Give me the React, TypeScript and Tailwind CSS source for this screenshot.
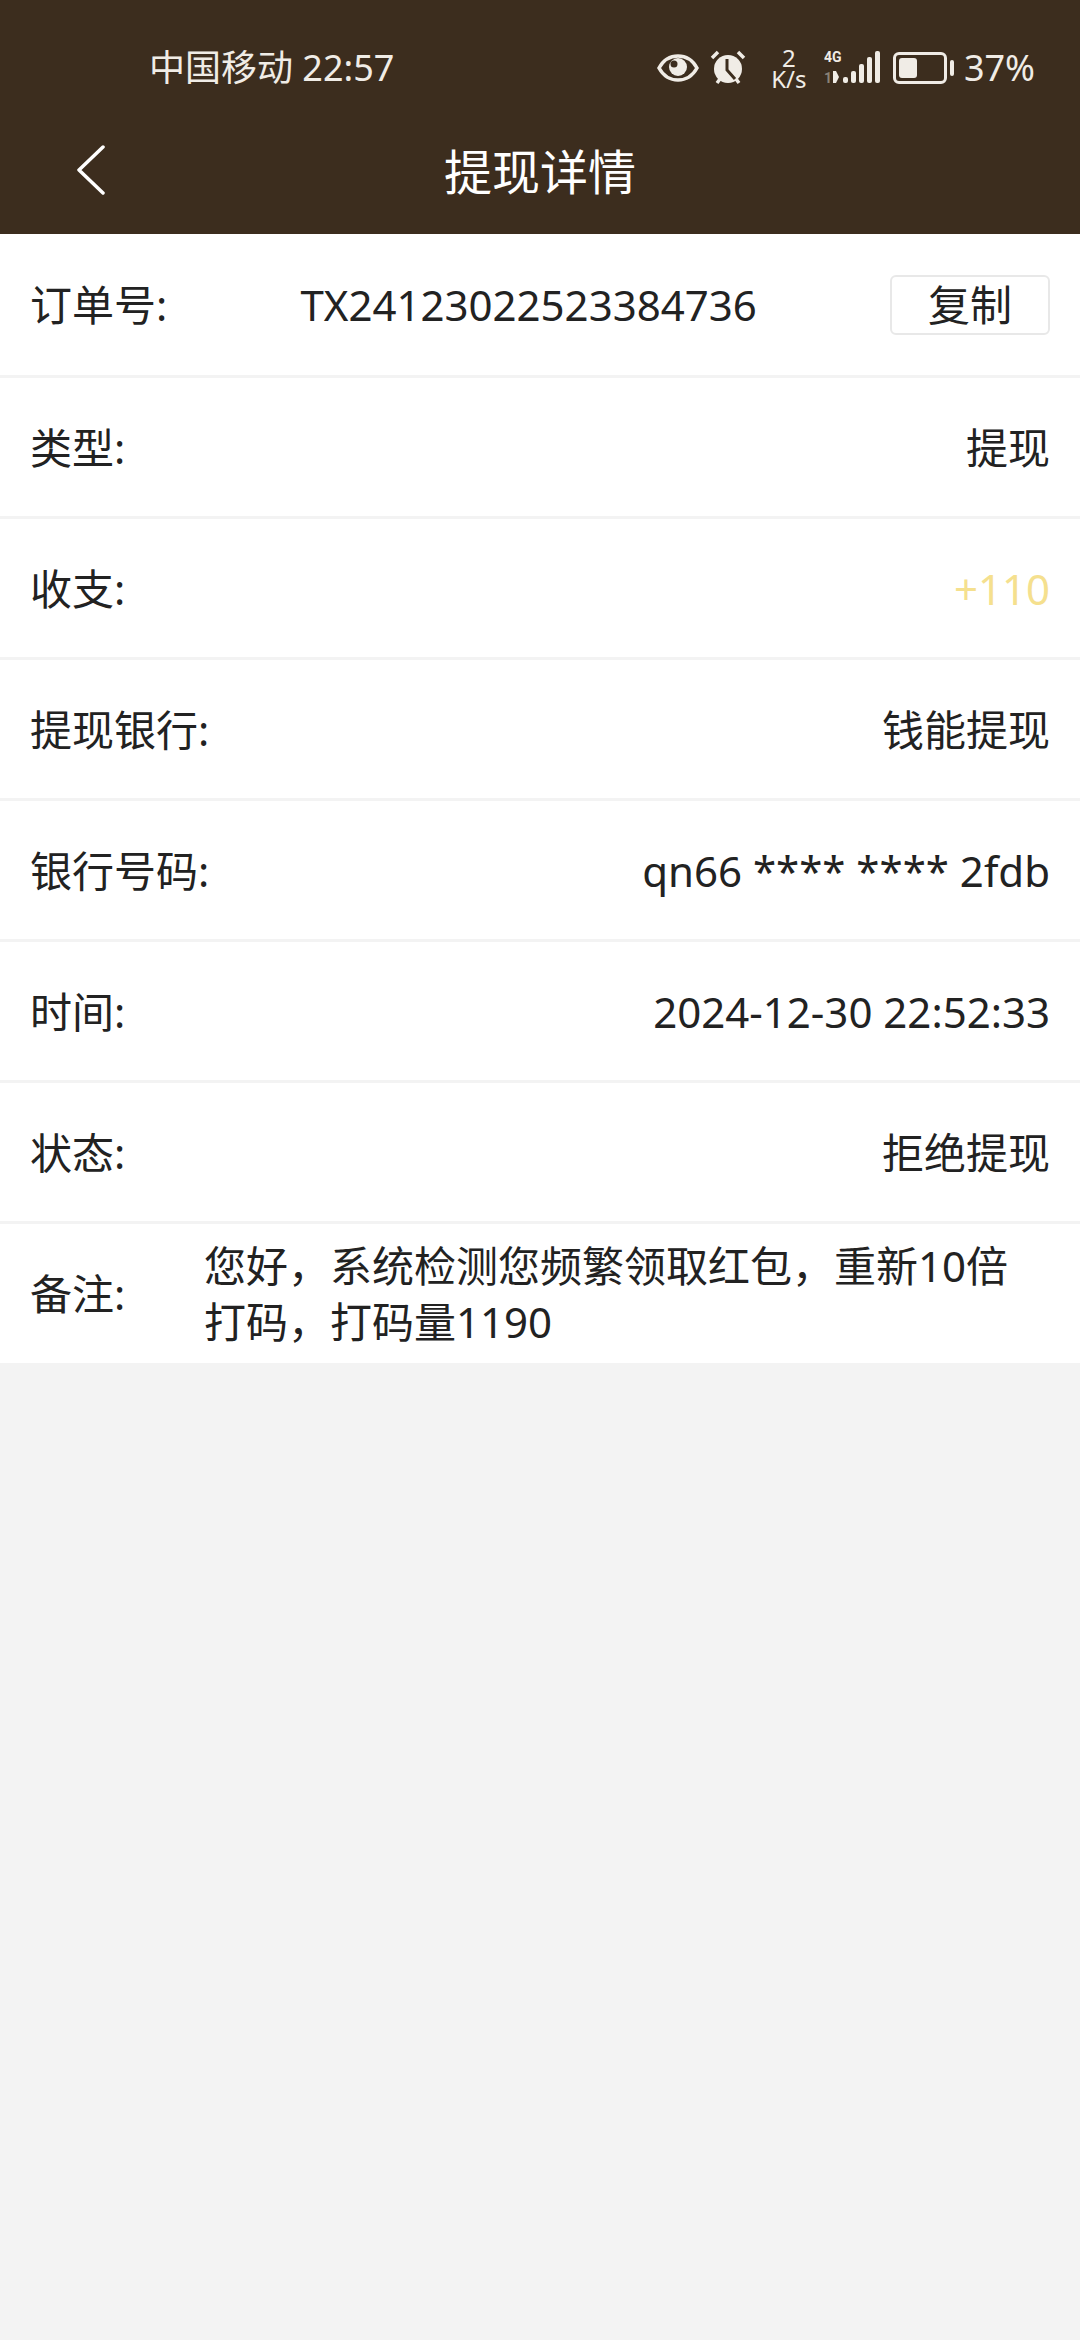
const font = "font-['Noto_Sans','Noto_Sans_CJK_SC',sans-serif]"

const rows = [
  { label: '类型:', value: '提现' },
  { label: '收支:', value: '+110', color: 'text-[#f5e08e]' },
  { label: '提现银行:', value: '钱能提现' },
  { label: '银行号码:', value: 'qn66 **** **** 2fdb' },
  { label: '时间:', value: '2024-12-30 22:52:33' },
  { label: '状态:', value: '拒绝提现' },
]

function StatusIcons() {
  return (
    <div className="flex items-center text-[#f0ece6]">
      {/* eye */}
      <svg width="42" height="30" viewBox="0 0 42 30" className="mr-[11px]">
        <path d="M2 15C7 6 14 3 21 3s14 3 19 12c-5 9-12 12-19 12S7 24 2 15z" fill="none" stroke="currentColor" strokeWidth="3.5" />
        <circle cx="21" cy="14" r="9" fill="currentColor" />
        <circle cx="17" cy="11" r="3.5" fill="#3c2d1e" />
      </svg>
      {/* alarm */}
      <svg width="36" height="36" viewBox="0 0 36 36" className="mr-[25px]">
        <circle cx="18" cy="19" r="14" fill="currentColor" />
        <path d="M2 8l6-6M34 8l-6-6M7 33l3-4M29 33l-3-4" stroke="currentColor" strokeWidth="3.5" />
        <path d="M17 9v11l8 9" fill="none" stroke="#3c2d1e" strokeWidth="3" />
      </svg>
      <div className="flex flex-col items-center text-[24px] leading-[21px] w-[36px] mr-[17px]">
        <span>2</span>
        <span>K/s</span>
      </div>
      {/* signal */}
      <svg width="56" height="36" viewBox="0 0 56 36" className="mr-[13px]">
        <text x="0" y="12" fontSize="14" fontWeight="700" fill="currentColor" fontFamily="Roboto">4G</text>
        <text x="0" y="33" fontSize="14" fontWeight="700" fill="#8a8278" fontFamily="Roboto">1</text>
        <path d="M9 21h3l3 6-3 6H9z" fill="currentColor" />
        <rect x="19" y="27" width="5" height="6" rx="2" fill="currentColor" />
        <rect x="27" y="21" width="5" height="12" rx="2" fill="currentColor" />
        <rect x="35" y="14" width="5" height="19" rx="2" fill="currentColor" />
        <rect x="43" y="7" width="5" height="26" rx="2" fill="currentColor" />
        <rect x="51" y="1" width="5" height="32" rx="2" fill="currentColor" />
      </svg>
      {/* battery */}
      <div className="flex items-center gap-[3px] mr-[10px]">
        <div className="w-[54px] h-[32px] border-[3px] border-[#f0ece6] rounded-[6px] p-[3px]">
          <div className="w-[18px] h-full bg-[#f0ece6] rounded-[3px]"></div>
        </div>
        <div className="w-[4px] h-[16px] bg-[#f0ece6] rounded-[2px]"></div>
      </div>
      <span className="text-[36px] leading-none">37%</span>
    </div>
  )
}

export default function App() {
  return (
    <div className={`min-h-[2340px] bg-[#f3f3f3] text-[#222222] ${font}`}>
      <div className="h-[234px] bg-[#3c2d1e]">
        <div className="h-[122px] pl-[149px] pr-[45px] pt-[30px] flex items-start justify-between">
          <div className="h-[76px] flex items-center text-[36px] text-[#f0ece6]">中国移动 22:57</div>
          <div className="h-[76px] flex items-center">
            <StatusIcons />
          </div>
        </div>
        <div className="relative h-[100px] flex items-center justify-center">
          <svg width="30" height="50" viewBox="0 0 30 50" className="absolute left-[76px] top-[23px]">
            <path d="M27 2L3 25l24 23" fill="none" stroke="#ffffff" strokeWidth="3.5" strokeLinecap="round" strokeLinejoin="round" />
          </svg>
          <h1 className="text-[48px] font-normal text-white">提现详情</h1>
        </div>
      </div>

      <div className="bg-white text-[42px]">
        <div className="h-[144px] px-[30px] flex items-center justify-between border-b-[3px] border-[#f3f3f3]">
          <span>订单号:</span>
          <span>TX24123022523384736</span>
          <button className="w-[160px] h-[60px] border-2 border-[#e8e8e8] rounded-[6px] flex items-center justify-center">复制</button>
        </div>
        {rows.map((row) => (
          <div key={row.label} className="h-[141px] px-[30px] flex items-center justify-between border-b-[3px] border-[#f3f3f3]">
            <span>{row.label}</span>
            <span className={row.color}>{row.value}</span>
          </div>
        ))}
        <div className="h-[139px] pl-[30px] pr-[30px] flex items-center">
          <span className="w-[174px] shrink-0">备注:</span>
          <p className="leading-[56px]">您好，系统检测您频繁领取红包，重新10倍打码，打码量1190</p>
        </div>
      </div>
    </div>
  )
}
